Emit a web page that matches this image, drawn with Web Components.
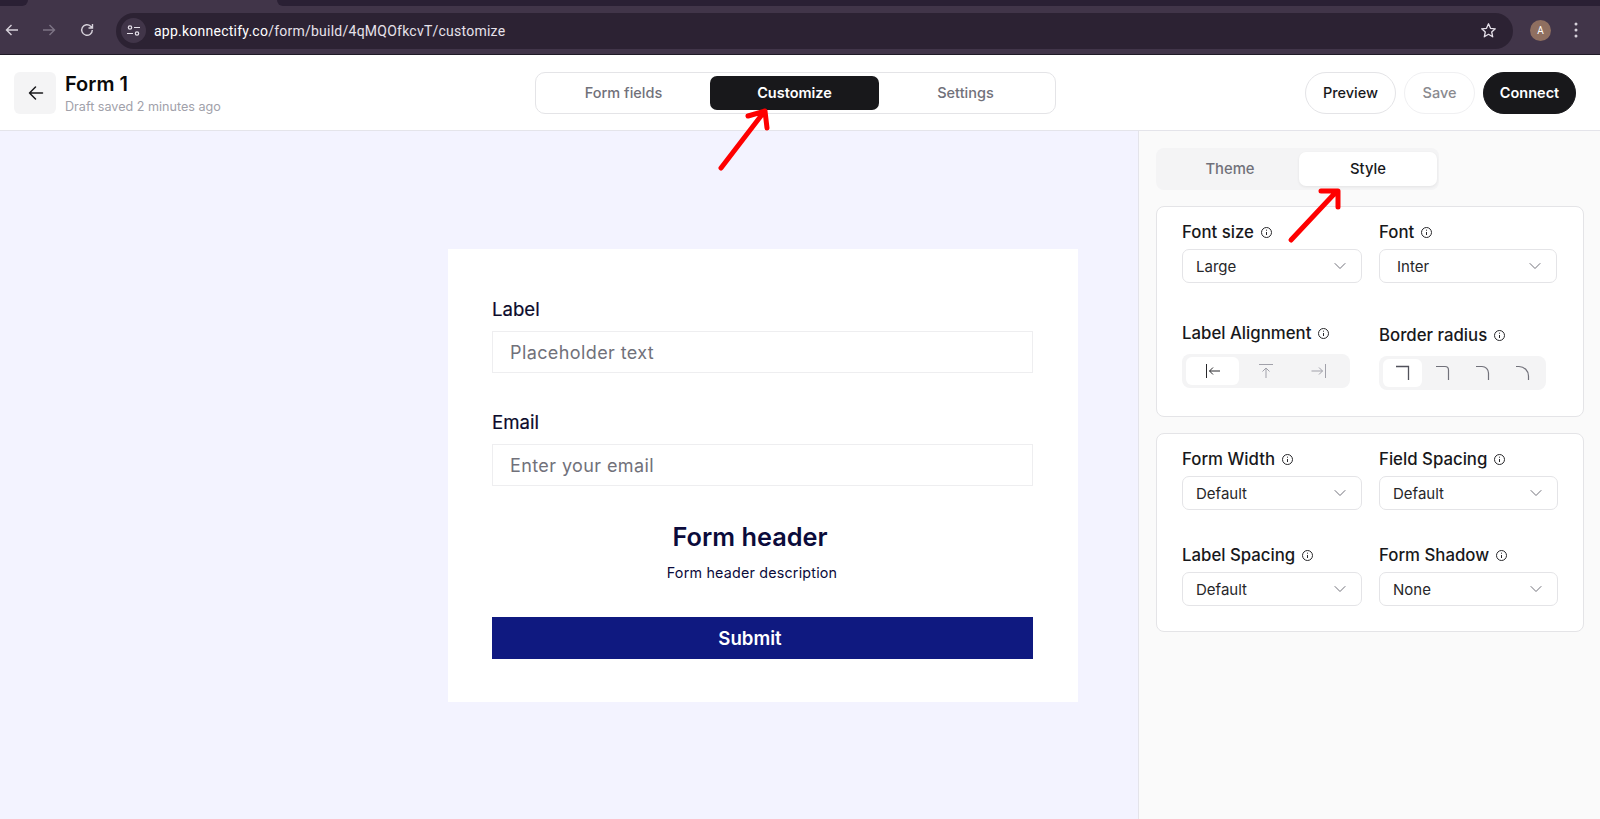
<!DOCTYPE html>
<html>
<head>
<meta charset="utf-8">
<title>Form 1</title>
<style>
  html, body { margin: 0; height: 100%; overflow: hidden; }
  body { font-family: Inter, "Liberation Sans", sans-serif; color: #18181b; background: #fff; }
  app-shell { height: 819px; }
</style>
</head>
<body>
<app-shell></app-shell>

<script>
// little helper, every element just hands over its html
function shadow(el, html) {
  el.attachShadow({mode: 'open'});
  el.shadowRoot.innerHTML = html;
}

const chevron = `<svg width="14" height="14" viewBox="0 0 14 14" fill="none" stroke="#71717a" stroke-width="1" stroke-linecap="round" stroke-linejoin="round"><path d="M2 4.5l5 5 5-5"/></svg>`;
const info = `<svg width="13" height="13" viewBox="0 0 13 13" fill="none" stroke="#27272a" stroke-width="1"><circle cx="6.5" cy="6.5" r="5"/><path d="M6.5 6v3M6.5 3.7v1" /></svg>`;

// Browser bar
class BrowserBar extends HTMLElement {
  constructor() {
    super();
    shadow(this, `
    <style>
      :host { display: block; background: #413549; height: 55px; box-sizing: border-box; border-bottom: 1px solid #1f1a26; }
      .strip { display: flex; height: 6px; }
      .strip .a { width: 28px; background: #2a2034; border-bottom-right-radius: 6px; }
      .strip .b { width: 249px; }
      .strip .c { flex: 1; background: #2a2034; border-bottom-left-radius: 6px; }
      .bar { display: flex; align-items: center; height: 48px; }
      .nav { display: flex; width: 116px; padding-left: 4px; box-sizing: border-box; gap: 21px; align-items: center; flex: none; }
      .nav svg:last-child { margin-left: 1px; }
      .omni { flex: none; width: 1397px; height: 36px; background: #2c2233; border-radius: 18px; display: flex; align-items: center; padding: 0 16px 0 5px; box-sizing: border-box; margin-top: 1px; }
      .tune { width: 25px; height: 25px; border-radius: 50%; background: #413549; display: flex; align-items: center; justify-content: center; flex: none; }
      .url { margin-left: 8px; color: #e6e1ea; font: 400 14px Roboto, "Liberation Sans", sans-serif; flex: 1; letter-spacing: .24px; }
      .url b { font-weight: 400; color: #fff; }
      .right { flex: 1; display: flex; align-items: center; padding-left: 17px; }
      .avatar { width: 21px; height: 21px; border-radius: 50%; background: #8f6f60; color: #fff; font: 400 10px Roboto, sans-serif; display: flex; align-items: center; justify-content: center; }
      .dots { margin-left: 23px; display: flex; }
    </style>
    <div class="strip"><div class="a"></div><div class="b"></div><div class="c"></div></div>
    <div class="bar">
      <div class="nav">
        <svg width="16" height="16" viewBox="0 0 16 16" fill="none" stroke="#d6d1da" stroke-width="1.4"><path d="M14 8H2.5M7.5 3L2.5 8l5 5"/></svg>
        <svg width="16" height="16" viewBox="0 0 16 16" fill="none" stroke="#7d7485" stroke-width="1.4"><path d="M2 8h11.5M8.500 3l5 5-5 5"/></svg>
        <svg width="16" height="16" viewBox="0 0 16 16" fill="none" stroke="#d6d1da" stroke-width="1.4"><path d="M13.300 8a5.300 5.300 0 1 1-1.600-3.800L13.500 6M13.500 2v4h-4"/></svg>
      </div>
      <div class="omni">
        <div class="tune"><svg width="15" height="15" viewBox="0 0 15 15" fill="none" stroke="#e6e1ea" stroke-width="1.200"><circle cx="4" cy="4.500" r="1.700"/><path d="M8 4.500h6M1 10.500h6"/><circle cx="11" cy="10.500" r="1.700"/></svg></div>
        <div class="url"><b>app.konnectify.co</b>/form/build/4qMQOfkcvT/customize</div>
        <svg width="17" height="17" viewBox="0 0 17 17" fill="none" stroke="#e6e1ea" stroke-width="1.300" stroke-linejoin="round"><path d="M8.500 1.800l2 4.500 4.800.5-3.600 3.200 1 4.800-4.200-2.500-4.200 2.500 1-4.800L1.700 6.800l4.800-.5z"/></svg>
      </div>
      <div class="right">
        <div class="avatar">A</div>
        <div class="dots"><svg width="4" height="16" viewBox="0 0 4 16" fill="#d6d1da"><circle cx="2" cy="2" r="1.500"/><circle cx="2" cy="8" r="1.500"/><circle cx="2" cy="14" r="1.500"/></svg></div>
      </div>
    </div>`);
  }
}
customElements.define('browser-bar', BrowserBar);

// Top header with tabs and actions
class PillButton extends HTMLElement {
  constructor() {
    super();
    shadow(this, `
    <style>
      :host { display: flex; align-items: center; justify-content: center; box-sizing: border-box; height: 42px; border-radius: 21px; border: 1px solid #e4e4e7; font-size: 14.5px; font-weight: 500; color: #18181b; background: #fff; }
      :host([kind=muted]) { color: #8a8a8f; border-color: #f0f0f2; }
      :host([kind=dark]) { background: #18181b; border-color: #18181b; color: #fff; font-weight: 600; }
    </style><slot></slot>`);
  }
}
customElements.define('pill-button', PillButton);

class AppHeader extends HTMLElement {
  constructor() {
    super();
    shadow(this, `
    <style>
      :host { display: flex; align-items: center; height: 76px; box-sizing: border-box; border-bottom: 1px solid #e4e4ea; background: #fff; padding: 0 24px 0 14px; flex: none; }
      .back { width: 42px; height: 42px; padding-left: 1px; box-sizing: border-box; background: #f4f4f5; border-radius: 6px; display: flex; align-items: center; justify-content: center; flex: none; }
      .titles { width: 470px; margin-left: 9px; flex: none; }
      .title { font-size: 20px; font-weight: 600; color: #0a0a0a; line-height: 24px; margin-top: 1px; }
      .sub { font-size: 12.6px; color: #a1a1aa; line-height: 16px; margin-top: 3px; }
      .tabs { width: 521px; height: 42px; box-sizing: border-box; border: 1px solid #e4e4e7; border-radius: 10px; display: flex; align-items: center; justify-content: space-between; padding: 0 5px 0 3px; flex: none; }
      .tab { width: 169px; height: 34px; display: flex; align-items: center; justify-content: center; font-size: 14.5px; font-weight: 500; color: #71717a; border-radius: 7px; }
      .tab.on { background: #18181b; color: #fff; font-weight: 600; }
      .actions { margin-left: auto; display: flex; gap: 8px; }
      pill-button:nth-child(1) { width: 91px; }
      pill-button:nth-child(2) { width: 71px; }
      pill-button:nth-child(3) { width: 93px; }
    </style>
    <div class="back"><svg width="18" height="18" viewBox="0 0 18 18" fill="none" stroke="#18181b" stroke-width="1.500" stroke-linecap="round" stroke-linejoin="round"><path d="M15.500 9H2.500M8.500 3l-6 6 6 6"/></svg></div>
    <div class="titles"><div class="title">Form 1</div><div class="sub">Draft saved 2 minutes ago</div></div>
    <div class="tabs"><div class="tab">Form fields</div><div class="tab on">Customize</div><div class="tab">Settings</div></div>
    <div class="actions">
      <pill-button>Preview</pill-button>
      <pill-button kind="muted">Save</pill-button>
      <pill-button kind="dark">Connect</pill-button>
    </div>`);
  }
}
customElements.define('app-header', AppHeader);

// Form preview
class FormField extends HTMLElement {
  constructor() {
    super();
    shadow(this, `
    <style>
      :host { display: block; }
      label { display: block; font-size: 18.6px; font-weight: 400; -webkit-text-stroke: .2px #0b0b2b; line-height: 22px; color: #0b0b2b; margin-bottom: 11px; }
      .input { height: 42px; box-sizing: border-box; border: 1px solid #eeeef0; padding: 0 17px; display: flex; align-items: center; font-size: 18px; color: #71717a; letter-spacing: .4px; }
    </style>
    <label>${this.getAttribute('label')}</label>
    <div class="input">${this.getAttribute('placeholder')}</div>`);
  }
}
customElements.define('form-field', FormField);

class FormPreview extends HTMLElement {
  constructor() {
    super();
    shadow(this, `
    <style>
      :host { display: block; width: 630px; height: 453px; box-sizing: border-box; background: #fff; padding: 49px 45px 0 44px; flex: none; }
      form-field { margin-bottom: 38px; }
      form-field + form-field { margin-bottom: 32px; }
      h2 { margin: 0; padding-right: 25px; text-align: center; font-size: 25.3px; font-weight: 600; line-height: 38px; color: #0b0b3b; }
      p { margin: 7px 0 0; padding-right: 21px; text-align: center; font-size: 14.3px; line-height: 20px; color: #0b0b3b; letter-spacing: .2px; }
      .submit { margin-top: 34px; height: 42px; box-sizing: border-box; padding-right: 25px; background: #0f1980; color: #fff; font-size: 18.6px; font-weight: 600; display: flex; align-items: center; justify-content: center; }
    </style>
    <form-field label="Label" placeholder="Placeholder text"></form-field>
    <form-field label="Email" placeholder="Enter your email"></form-field>
    <h2>Form header</h2>
    <p>Form header description</p>
    <div class="submit">Submit</div>`);
  }
}
customElements.define('form-preview', FormPreview);

// Sidebar controls
class SelectField extends HTMLElement {
  constructor() {
    super();
    shadow(this, `
    <style>
      :host { display: block; }
      .lab { display: flex; align-items: center; gap: 6px; font-size: 16.8px; font-weight: 500; line-height: 20px; color: #18181b; margin-bottom: 7px; }
      .box { height: 34px; box-sizing: border-box; border: 1px solid #e4e4e7; border-radius: 7px; background: #fff; display: flex; align-items: center; justify-content: space-between; padding: 0 14px 0 var(--pad, 13px); font-size: 15px; color: #27272a; }
    </style>
    <div class="lab">${this.getAttribute('label')} ${info}</div>
    <div class="box"><span>${this.getAttribute('value')}</span>${chevron}</div>`);
  }
}
customElements.define('select-field', SelectField);

class SegGroup extends HTMLElement {
  constructor() {
    super();
    shadow(this, `
    <style>
      :host { display: block; }
      .lab { display: flex; align-items: center; gap: 6px; font-size: 16.8px; font-weight: 500; line-height: 20px; color: #18181b; margin-bottom: 11px; }
      .seg { height: 34px; background: #f4f4f5; border-radius: 8px; display: flex; align-items: center; padding: 3px 4px; box-sizing: border-box; gap: 1px; }
      ::slotted(span) { flex: 1; height: 28px; display: flex; align-items: center; justify-content: center; border-radius: 6px; }
      ::slotted(span.on) { background: #fff; }
    </style>
    <div class="lab">${this.getAttribute('label')} ${info}</div>
    <div class="seg"><slot></slot></div>`);
  }
}
customElements.define('seg-group', SegGroup);

class StylePanel extends HTMLElement {
  constructor() {
    super();
    shadow(this, `
    <style>
      :host { display: block; width: 462px; box-sizing: border-box; background: #fafafa; border-left: 1px solid #e4e4ea; padding: 17px 16px 0 17px; flex: none; }
      .switch { width: 283px; height: 42px; box-sizing: border-box; background: #f4f4f5; border-radius: 8px; display: flex; padding: 4px 2px 4px 5px; margin-bottom: 16px; }
      .switch div { flex: 1; display: flex; align-items: center; justify-content: center; font-size: 14.8px; font-weight: 500; color: #71717a; border-radius: 7px; }
      .switch .on { background: #fff; color: #18181b; box-shadow: 0 1px 3px rgba(0,0,0,.07); }
      .card { background: #fff; border: 1px solid #e4e4e7; border-radius: 8px; box-sizing: border-box; padding: 15px 26px 0 25px; width: 428px; }
      .card.one { height: 211px; margin-bottom: 16px; }
      .card.two { height: 199px; }
      .grid { display: grid; grid-template-columns: 180px 179px; column-gap: 17px; row-gap: 35px; }
      .card.one .grid { row-gap: 40px; grid-template-columns: 180px 178px; }
      .card.one seg-group:nth-child(4) { margin-top: 2px; width: 167px; }
      .card.one seg-group:nth-child(3) { width: 168px; }
    </style>
    <div class="switch"><div>Theme</div><div class="on">Style</div></div>
    <div class="card one"><div class="grid">
      <select-field label="Font size" value="Large"></select-field>
      <select-field label="Font" value="Inter" style="--pad:17px"></select-field>
      <seg-group label="Label Alignment">
        <span class="on"><svg width="18" height="16" viewBox="0 0 18 16" fill="none" stroke="#27272a" stroke-width="1"><path d="M3.500 1v14M17 8H6.500M10 4.500L6.500 8l3.500 3.500"/></svg></span>
        <span><svg width="18" height="18" viewBox="0 0 18 18" fill="none" stroke="#a1a1aa" stroke-width="1"><path d="M2 2.500h14M9 16V6M5.500 9.500L9 6l3.500 3.500"/></svg></span>
        <span><svg width="18" height="16" viewBox="0 0 18 16" fill="none" stroke="#a1a1aa" stroke-width="1"><path d="M14.500 1v14M.5 8h11M8 4.500L11.500 8 8 11.500"/></svg></span>
      </seg-group>
      <seg-group label="Border radius">
        <span class="on"><svg width="16" height="16" viewBox="0 0 16 16" fill="none" stroke="#52525b" stroke-width="1.300"><path d="M1 1.500h12.500V15"/></svg></span>
        <span><svg width="16" height="16" viewBox="0 0 16 16" fill="none" stroke="#71717a" stroke-width="1.200"><path d="M1 1.500h9a3.500 3.500 0 0 1 3.500 3.500V15"/></svg></span>
        <span><svg width="16" height="16" viewBox="0 0 16 16" fill="none" stroke="#71717a" stroke-width="1.200"><path d="M1 1.500h6a6.500 6.500 0 0 1 6.500 6.500V15"/></svg></span>
        <span><svg width="16" height="16" viewBox="0 0 16 16" fill="none" stroke="#71717a" stroke-width="1.200"><path d="M1 1.500h3a9.500 9.500 0 0 1 9.500 9.500V15"/></svg></span>
      </seg-group>
    </div></div>
    <div class="card two"><div class="grid">
      <select-field label="Form Width" value="Default"></select-field>
      <select-field label="Field Spacing" value="Default"></select-field>
      <select-field label="Label Spacing" value="Default"></select-field>
      <select-field label="Form Shadow" value="None"></select-field>
    </div></div>`);
  }
}
customElements.define('style-panel', StylePanel);

// Annotation arrow, red and drawn over the page
class RedArrow extends HTMLElement {
  constructor() {
    super();
    shadow(this, `
    <style>:host { position: absolute; left: ${this.getAttribute('x')}px; top: ${this.getAttribute('y')}px; width: 62px; height: 66px; pointer-events: none; }</style>
    <svg width="62" height="66" viewBox="0 0 62 66" fill="none" stroke="#fe0000" stroke-width="5" stroke-linecap="round" stroke-linejoin="round">
      <path d="${this.getAttribute('d')}"/>
    </svg>`);
  }
}
customElements.define('red-arrow', RedArrow);

class AppShell extends HTMLElement {
  constructor() {
    super();
    shadow(this, `
    <style>
      :host { display: flex; flex-direction: column; position: relative; overflow: hidden; }
      .main { flex: 1; display: flex; min-height: 0; }
      .canvas { flex: 1; background: #f3f3ff; padding: 118px 60px 0 0; display: flex; justify-content: flex-end; align-items: flex-start; }
    </style>
    <browser-bar></browser-bar>
    <app-header></app-header>
    <div class="main">
      <div class="canvas"><form-preview></form-preview></div>
      <style-panel></style-panel>
    </div>
    <red-arrow x="715" y="106" d="M6 62L49 6M33 10L50 5L52 22"></red-arrow>
    <red-arrow x="1286" y="184" d="M5 56L50 8M35 7L52 7L52 23"></red-arrow>`);
  }
}
customElements.define('app-shell', AppShell);
</script>
</body>
</html>
